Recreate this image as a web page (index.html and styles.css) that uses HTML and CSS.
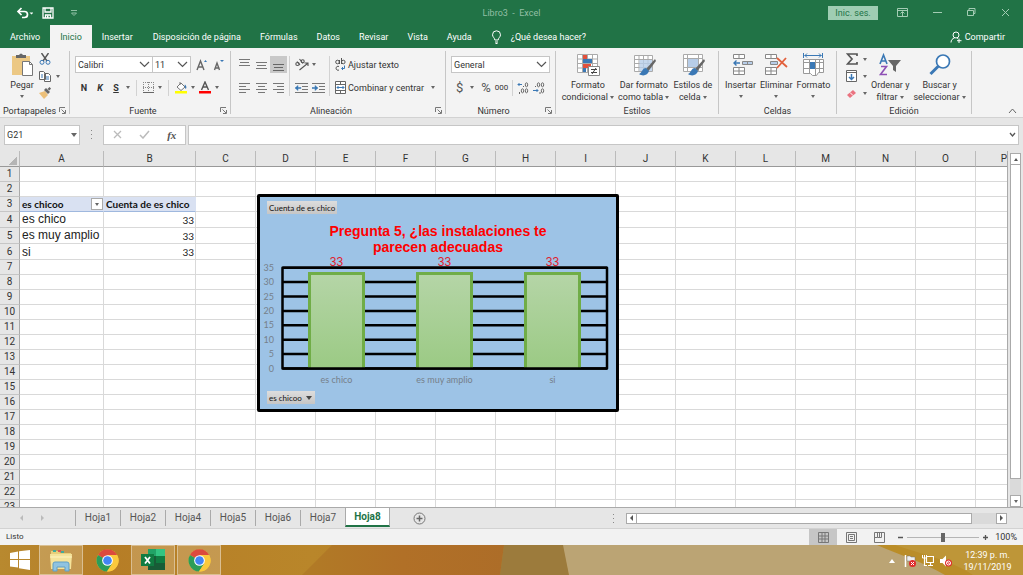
FILE: index.html
```html
<!DOCTYPE html>
<html lang="es">
<head>
<meta charset="utf-8">
<meta name="viewport" content="width=device-width, initial-scale=1">
<title>Libro3 - Excel</title>
<link rel="stylesheet" href="styles.css">
</head>
<body>
<header class="titlebar">
  <div class="quick">
    <button aria-label="Deshacer"><svg width="17" height="14" viewBox="0 0 17 14"><path d="M2 5.500h6.500a3 3 0 0 1 0 6H6M5.500 2 2 5.500 5.500 9" fill="none" stroke="#fff" stroke-width="1.700"/><path d="M13.500 6.500h4l-2 2z" fill="#fff"/></svg></button>
    <button aria-label="Guardar"><svg width="12" height="12" viewBox="0 0 12 12"><path d="M1 1h10v10H1zM3 1v4h6V1M3.500 11V8h5v3" fill="none" stroke="#fff" stroke-width="1.300"/><path d="M5 8.500h1.500V11H5z" fill="#fff"/></svg></button>
    <button aria-label="Personalizar barra"><svg width="8" height="8" viewBox="0 0 8 8"><path d="M1 1.500h6M1.500 4h5L4 6.500z" fill="none" stroke="#8fc0a4"/></svg></button>
  </div>
  <h1>Libro3&nbsp; -&nbsp; Excel</h1>
  <div class="window">
    <button class="signin">Inic. ses.</button>
    <button aria-label="Opciones de cinta"><svg width="11" height="9" viewBox="0 0 11 9"><path d="M.5.500h10v8H.500zM.5 2.500h10M5.500 8V4M3.500 5.500l2-2 2 2" fill="none" stroke="#a4ccb4"/></svg></button>
    <button aria-label="Minimizar"><svg width="9" height="9" viewBox="0 0 9 9"><path d="M0 4.500h9" stroke="#a4ccb4"/></svg></button>
    <button aria-label="Restaurar"><svg width="9" height="9" viewBox="0 0 9 9"><path d="M.5 2.500h6v5h-6zM2 2V.500h6v5H6.500" fill="none" stroke="#a4ccb4"/></svg></button>
    <button aria-label="Cerrar"><svg width="9" height="9" viewBox="0 0 9 9"><path d="m1 1 7 7M8 1 1 8" stroke="#a4ccb4"/></svg></button>
  </div>
</header>
<nav class="tabs">
  <button>Archivo</button><button class="on">Inicio</button><button>Insertar</button><button>Disposición de página</button><button>Fórmulas</button><button>Datos</button><button>Revisar</button><button>Vista</button><button>Ayuda</button>
  <button class="tell"><svg width="11" height="14" viewBox="0 0 11 14"><path d="M3.800 10C3.800 8 1.500 7 1.500 4.800a4 4 0 0 1 8 0C9.500 7 7.200 8 7.200 10zM4 12h3M4.500 13.500h2" fill="none" stroke="#fff"/></svg>¿Qué desea hacer?</button>
  <button class="share"><svg width="12" height="12" viewBox="0 0 12 12"><circle cx="6" cy="4" r="3" fill="none" stroke="#fff"/><path d="M1 11.500C1 9 2.500 7.500 4.500 7M7 7l1 .500M9 7.500v4.500M7 9.700h4.500" fill="none" stroke="#fff"/></svg>Compartir</button>
</nav>

<section class="ribbon">
  <div class="group clip">
    <div class="body">
      <button class="big"><svg width="24" height="24" viewBox="0 0 24 24"><path d="M2 3h18v19H2z" fill="#ecc884"/><path d="M6 2h3q2-3 4 0h3v3H6z" fill="#666"/><path d="M12.500 8.500h7l3 3v11h-10z" fill="#fff" stroke="#777"/><path d="M19.500 8.500v3h3" fill="none" stroke="#777"/></svg><span>Pegar</span><i class="dd"></i></button>
      <div class="stack">
        <button aria-label="Cortar"><svg width="12" height="12" viewBox="0 0 12 12"><path d="m2.500 0 5.500 8M9.500 0 4 8" stroke="#555" stroke-width="1.400"/><circle cx="3" cy="9.300" r="2" fill="none" stroke="#3a78b5"/><circle cx="9" cy="9.300" r="2" fill="none" stroke="#3a78b5"/></svg></button>
        <button aria-label="Copiar"><svg width="12" height="12" viewBox="0 0 12 12"><path d="M.500 1.500h4l2 2v6h-6zM5.500 3.500h4l2 2v6h-6z" fill="#fff" stroke="#666"/><path d="M2 5h2M2 7h2M7 7h3M7 9h3" stroke="#3a78b5"/></svg><i class="dd"></i></button>
        <button aria-label="Copiar formato"><svg width="12" height="12" viewBox="0 0 12 12"><path d="m0 6 6-2 3 4-4 4z" fill="#ecc07a"/><path d="m5 3 2-2 4 4-2 2zM8.500 2l2-2L12 1.500l-1.500 2z" fill="#666"/></svg></button>
      </div>
    </div>
    <footer>Portapapeles<svg class="launch" width="7" height="7" viewBox="0 0 7 7"><path d="M.500 5V.500H6M2.500 2.500l3.500 3.500M6.500 3v3.500H3" fill="none" stroke="#777"/></svg></footer>
  </div>

  <div class="group font">
    <div class="body rows">
      <div class="line">
        <label class="combo face"><select aria-label="Fuente"><option>Calibri</option></select><svg width="11" height="7" viewBox="0 0 11 7"><path d="m1 1 4.500 4.500L10 1" fill="none" stroke="#555" stroke-width="1.200"/></svg></label>
        <label class="combo size"><select aria-label="Tamaño"><option>11</option></select><svg width="11" height="7" viewBox="0 0 11 7"><path d="m1 1 4.500 4.500L10 1" fill="none" stroke="#555" stroke-width="1.200"/></svg></label>
        <button class="grow" aria-label="Aumentar fuente"><svg width="12" height="12" viewBox="0 0 12 12"><path d="m1 11 3.500-9 3.500 9M2 8h5" fill="none" stroke="#666" stroke-width="1.400"/><path d="m8 3 1.500-2L11 3z" fill="#3a78b5"/></svg></button>
        <button class="grow" aria-label="Disminuir fuente"><svg width="12" height="12" viewBox="0 0 12 12"><path d="m1.500 11 2.500-7 2.500 7M2.500 9h4" fill="none" stroke="#666" stroke-width="1.400"/><path d="m7 1 2 2 2-2z" fill="#3a78b5"/></svg></button>
      </div>
      <div class="line">
        <button class="letter bold">N</button><button class="letter ital">K</button><button class="letter under">S</button><i class="dd"></i><i class="bar"></i>
        <button aria-label="Bordes"><svg width="11" height="11" viewBox="0 0 11 11"><path d="M.500 0v10M5.500 0v10M10.500 0v10M0 .5h11M0 5.500h11" stroke="#888" stroke-dasharray="1 1"/><path d="M0 10.500h11" stroke="#666"/></svg></button><i class="dd"></i><i class="bar"></i>
        <button aria-label="Relleno"><svg width="12" height="13" viewBox="0 0 12 13"><path d="m2 6 4-4 4 4-4 3.500z" fill="#fff" stroke="#777"/><path d="M5 4V1" stroke="#777"/><path d="M10 3.500c2 2 1.500 4 .5 4.500L9.500 5z" fill="#3a78b5"/><path d="M0 10h12v2.500H0z" fill="#ff0"/></svg></button><i class="dd"></i>
        <button aria-label="Color de fuente"><svg width="12" height="13" viewBox="0 0 12 13"><path d="m2.500 9 3.500-8 3.500 8M3.500 6h5" fill="none" stroke="#555" stroke-width="1.400"/><path d="M0 10h12v2.500H0z" fill="#f00"/></svg></button><i class="dd"></i>
      </div>
    </div>
    <footer>Fuente<svg class="launch" width="7" height="7" viewBox="0 0 7 7"><path d="M.500 5V.500H6M2.500 2.500l3.500 3.500M6.500 3v3.500H3" fill="none" stroke="#777"/></svg></footer>
  </div>

  <div class="group align">
    <div class="body">
      <div class="aligns">
        <button aria-label="Arriba"><svg width="11" height="12" viewBox="0 0 11 12"><path d="M0 .5h11M1 3.500h9M0 6.500h11" stroke="#777"/></svg></button>
        <button aria-label="Medio"><svg width="11" height="12" viewBox="0 0 11 12"><path d="M0 3.500h11M1 6.500h9M0 9.500h11" stroke="#777"/></svg></button>
        <button class="pressed" aria-label="Abajo"><svg width="11" height="12" viewBox="0 0 11 12"><path d="M0 5.500h11M1 8.500h9M0 11.500h11" stroke="#666"/></svg></button>
        <button aria-label="Izquierda"><svg width="11" height="12" viewBox="0 0 11 12"><path d="M0 1.500h11M0 4.500h7M0 7.500h11M0 10.500h7" stroke="#777"/></svg></button>
        <button aria-label="Centro"><svg width="11" height="12" viewBox="0 0 11 12"><path d="M0 1.500h11M2 4.500h7M0 7.500h11M2 10.500h7" stroke="#777"/></svg></button>
        <button aria-label="Derecha"><svg width="11" height="12" viewBox="0 0 11 12"><path d="M0 1.500h11M4 4.500h7M0 7.500h11M4 10.500h7" stroke="#777"/></svg></button>
      </div>
      <div class="indent">
        <button class="wide" aria-label="Orientación"><svg width="14" height="13" viewBox="0 0 14 13"><g fill="none" stroke="#555" stroke-width="1.100"><ellipse cx="2.500" cy="6" rx="1.700" ry="1.500"/><path d="m2 3.500 3 3.500M4.500 1l3.500 4.500"/><circle cx="7.700" cy="3.200" r="1.500"/><path d="m4.500 12 8-6.500M9.500 5H13v3"/></g></svg><i class="dd"></i></button>
        <button aria-label="Disminuir sangría"><svg width="13" height="12" viewBox="0 0 13 12"><path d="M0 1.500h13M7 4.500h6M7 7.500h6M0 10.500h13" stroke="#777"/><path d="m0 6 3-2.500v2h3v1H3v2z" fill="#3a78b5" stroke="#3a78b5" stroke-width=".5"/></svg></button>
        <button aria-label="Aumentar sangría"><svg width="13" height="12" viewBox="0 0 13 12"><path d="M0 1.500h13M7 4.500h6M7 7.500h6M0 10.500h13" stroke="#777"/><path d="M6 6 3 3.500v2H0v1h3v2z" fill="#3a78b5" stroke="#3a78b5" stroke-width=".5"/></svg></button>
      </div>
      <div class="wraps">
        <button><svg width="11" height="13" viewBox="0 0 11 13"><g fill="none" stroke="#555"><circle cx="2.500" cy="4" r="1.800"/><path d="M4.500 2v4M6.500 0v6M4 8.500a2 2 0 1 0 0 3.500"/><circle cx="8.300" cy="4" r="1.800"/></g><path d="M9.500 7.500v3H7M8 9l-1.500 1.500L8 12" fill="none" stroke="#3a78b5"/></svg>Ajustar texto</button>
        <button><svg width="11" height="13" viewBox="0 0 11 13"><path d="M.500.500h10v12H.500zM.500 3.500h10M.500 9.500h10M5.500.5v3M5.500 9.500v3" fill="#fff" stroke="#666"/><path d="M2 6.500h7M3.500 5 2 6.500 3.500 8M7.500 5 9 6.500 7.500 8" fill="none" stroke="#3a78b5"/></svg>Combinar y centrar<i class="dd"></i></button>
      </div>
    </div>
    <footer>Alineación<svg class="launch" width="7" height="7" viewBox="0 0 7 7"><path d="M.500 5V.500H6M2.500 2.500l3.500 3.500M6.500 3v3.500H3" fill="none" stroke="#777"/></svg></footer>
  </div>

  <div class="group number">
    <div class="body rows">
      <div class="line"><label class="combo format"><select aria-label="Formato de número"><option>General</option></select><svg width="11" height="7" viewBox="0 0 11 7"><path d="m1 1 4.500 4.500L10 1" fill="none" stroke="#555" stroke-width="1.200"/></svg></label></div>
      <div class="line nums">
        <button class="sign">$</button><i class="dd"></i><button class="sign">%</button><button class="zeros">000</button><i class="bar"></i>
        <button aria-label="Aumentar decimales"><svg width="12" height="12" viewBox="0 0 12 12"><path d="M5 2.500H1M2.500 1 1 2.500 2.500 4" fill="none" stroke="#3a78b5"/><g fill="none" stroke="#666"><ellipse cx="9.500" cy="2.800" rx="1.200" ry="2"/><ellipse cx="5.500" cy="8.800" rx="1.200" ry="2"/><ellipse cx="9.500" cy="8.800" rx="1.200" ry="2"/><path d="M2.500 10v2M6.500 4v1"/></g></svg></button>
        <button aria-label="Disminuir decimales"><svg width="12" height="12" viewBox="0 0 12 12"><path d="M0 8.500h5M3.500 7 5 8.500 3.500 10" fill="none" stroke="#3a78b5"/><g fill="none" stroke="#666"><ellipse cx="5.500" cy="2.800" rx="1.200" ry="2"/><ellipse cx="9.500" cy="2.800" rx="1.200" ry="2"/><ellipse cx="9.500" cy="8.800" rx="1.200" ry="2"/><path d="M2.500 4v1M7 10v2"/></g></svg></button>
      </div>
    </div>
    <footer>Número<svg class="launch" width="7" height="7" viewBox="0 0 7 7"><path d="M.500 5V.500H6M2.500 2.500l3.500 3.500M6.500 3v3.500H3" fill="none" stroke="#777"/></svg></footer>
  </div>

  <div class="group styles">
    <div class="body">
      <button class="big"><svg width="24" height="24" viewBox="0 0 24 24"><path d="M1.500 1.500h20v18h-20zM6.500 1.500v18M16.500 1.500v18M1.500 6h20M1.500 10.500h20M1.500 15h20M11.500 1.500v18" fill="#fff" stroke="#aaa"/><path d="M7 2h4v4H7zM7 11h8v4H7z" fill="#e2503c"/><path d="M7 6h9v4H7zM7 15h3v4H7z" fill="#3a78b5"/><path d="M12.500 13.500h11v9h-11z" fill="#fff" stroke="#888"/><path d="M15 16.500h6M15 19.500h6M20 15l-4 6" stroke="#444"/></svg><span>Formato<br>condicional <i class="dd"></i></span></button>
      <button class="big"><svg width="24" height="24" viewBox="0 0 24 24"><path d="M2.500 2.500h18v16h-18zM2.500 6.500h18M2.500 10.500h18M2.500 14.500h18M7 2.500v16M11.500 2.500v16M16 2.500v16" fill="#fff" stroke="#aaa"/><path d="M7.500 7H20v11H7.500z" fill="#b7cde8" opacity=".8"/><path d="m23 6-9 10 2.500 2L24 8z" fill="#666"/><path d="M14 15c-4 0-4 5-7 6 4 3 9 1 10-3z" fill="#3a78b5"/></svg><span>Dar formato<br>como tabla <i class="dd"></i></span></button>
      <button class="big"><svg width="24" height="24" viewBox="0 0 24 24"><path d="M2.500 1.500h19v17h-19zM2.500 5.500h19M2.500 14.500h19M6.500 1.500v17M17.500 1.500v17" fill="#fff" stroke="#aaa"/><path d="M7 6h10v8H7z" fill="#b7cde8"/><path d="m23 6-9 10 2.500 2L24 8z" fill="#666"/><path d="M14 15c-4 0-4 5-7 6 4 3 9 1 10-3z" fill="#3a78b5"/></svg><span>Estilos de<br>celda <i class="dd"></i></span></button>
    </div>
    <footer>Estilos</footer>
  </div>

  <div class="group cells">
    <div class="body">
      <button class="big"><svg width="24" height="24" viewBox="0 0 24 24"><path d="M4.500 1.500h11v4h-11zM10 1.500v4M4.500 14.500h11v7h-11zM4.500 18h11M10 14.500v7" fill="#fff" stroke="#888"/><path d="M13.500 8.500h10v3h-10zM18.500 8.500v3" fill="#b7cde8" stroke="#888"/><path d="M11 10H5M7.500 7.500 5 10l2.500 2.500" fill="none" stroke="#3a78b5" stroke-width="1.400"/></svg><span>Insertar</span><i class="dd"></i></button>
      <button class="big"><svg width="24" height="24" viewBox="0 0 24 24"><path d="M1.500 1.500h11v4h-11zM7 1.500v4M1.500 14.500h11v7h-11zM1.500 18h11M7 14.500v7" fill="#fff" stroke="#888"/><path d="M6.500 8.500h7v3h-7z" fill="#b7cde8" stroke="#888"/><path d="m13 5 10 9M22 5l-9 10" stroke="#e2603c" stroke-width="1.800"/></svg><span>Eliminar</span><i class="dd"></i></button>
      <button class="big"><svg width="24" height="24" viewBox="0 0 24 24"><path d="M3.500 2.500h17M6 .5l-2 2 2 2M18 .5l2 2-2 2M2.500 0v5M21.500 0v5" fill="none" stroke="#3a78b5"/><path d="M2.500 6.500h20v13h-5l-2 3h-4l-2-2h-7zM2.500 9.500h20M2.500 15.500h20M8.500 6.500v14M14.500 6.500v16M18.500 6.500v13" fill="#fff" stroke="#999"/><path d="M9 9h5v7H9z" fill="#3a78b5"/></svg><span>Formato</span><i class="dd"></i></button>
    </div>
    <footer>Celdas</footer>
  </div>

  <div class="group edit">
    <div class="body">
      <div class="stack">
        <button aria-label="Autosuma"><svg width="12" height="12" viewBox="0 0 12 12"><path d="M11 3V1H1.500L6 6l-4.500 5H11V9" fill="none" stroke="#555" stroke-width="1.700"/></svg><i class="dd"></i></button>
        <button aria-label="Rellenar"><svg width="12" height="12" viewBox="0 0 12 12"><path d="M.5.500h10v11H.500zM.5 2.500h10" fill="#fff" stroke="#666"/><path d="M5.500 4v5M3 7l2.500 2.500L8 7" fill="none" stroke="#3a78b5" stroke-width="1.500"/></svg><i class="dd"></i></button>
        <button aria-label="Borrar"><svg width="12" height="12" viewBox="0 0 12 12"><path d="m1 8 6-5 3 3-6 5z" fill="#ea7380"/><path d="m4 5.500 3 3" stroke="#fff"/></svg><i class="dd"></i></button>
      </div>
      <button class="big"><svg width="24" height="24" viewBox="0 0 24 24"><path d="m2 11 3.500-9L9 11M3 8h5" fill="none" stroke="#3a78b5" stroke-width="1.600"/><path d="M3 13.500h5.500l-6 8H9" fill="none" stroke="#8e50b5" stroke-width="1.600"/><path d="M10 7h13l-5 6v6l-3-2v-4z" fill="#666"/></svg><span>Ordenar y<br>filtrar <i class="dd"></i></span></button>
      <button class="big"><svg width="24" height="24" viewBox="0 0 24 24"><circle cx="15" cy="8.500" r="6.500" fill="#fff" stroke="#3a78b5" stroke-width="1.700"/><path d="m10.500 13-8 8" stroke="#3a78b5" stroke-width="3"/></svg><span>Buscar y<br>seleccionar <i class="dd"></i></span></button>
    </div>
    <footer>Edición</footer>
  </div>
  <button class="collapse" aria-label="Contraer cinta"><svg width="9" height="6" viewBox="0 0 9 6"><path d="m1 5 3.500-4L8 5" fill="none" stroke="#666"/></svg></button>
</section>

<section class="formula">
  <label class="combo name"><select aria-label="Cuadro de nombres"><option>G21</option></select><i class="dd"></i></label>
  <i class="dots"></i>
  <div class="fx">
    <button aria-label="Cancelar"><svg width="9" height="9" viewBox="0 0 9 9"><path d="m1 1 7 7M8 1 1 8" stroke="#bbb" stroke-width="1.300"/></svg></button>
    <button aria-label="Introducir"><svg width="11" height="9" viewBox="0 0 11 9"><path d="m1 5 3 3 6-7" fill="none" stroke="#bbb" stroke-width="1.500"/></svg></button>
    <button class="func">fx</button>
  </div>
  <div class="entry"><input aria-label="Barra de fórmulas"><svg width="7" height="6" viewBox="0 0 7 6"><path d="m1 1 2.500 3L6 1" fill="none" stroke="#555" stroke-width="1.300"/></svg></div>
</section>

<main class="sheet">
  <div class="grid">
    <table id="cells"></table>
    <figure class="chart">
      <button class="field">Cuenta de es chico</button>
      <figcaption>Pregunta 5, ¿las instalaciones te<br>parecen adecuadas</figcaption>
      <svg class="plot" id="plot" width="356" height="134" viewBox="0 0 356 134"></svg>
      <button class="field">es chicoo <i class="dd"></i></button>
    </figure>
  </div>
  <div class="vscroll"><button aria-label="Subir"><i class="up"></i></button><i class="thumb"></i><i class="gap"></i><button aria-label="Bajar"><i class="dd"></i></button></div>
</main>

<nav class="sheets">
  <div class="arrows"><i class="left"></i><i class="right"></i></div>
  <button>Hoja1</button><button>Hoja2</button><button>Hoja4</button><button>Hoja5</button><button>Hoja6</button><button>Hoja7</button><button class="on">Hoja8</button>
  <button class="add" aria-label="Hoja nueva"><svg width="13" height="13" viewBox="0 0 13 13"><circle cx="6.500" cy="6.500" r="5.500" fill="none" stroke="#777"/><path d="M6.500 3.500v6M3.500 6.500h6" stroke="#666" stroke-width="1.500"/></svg></button>
  <i class="dots"></i>
  <div class="hscroll"><button aria-label="Izquierda"><i class="left"></i></button><i class="thumb"></i><i class="gap"></i><button aria-label="Derecha"><i class="right"></i></button></div>
</nav>

<footer class="status">
  <span class="ready">Listo</span>
  <button class="view on" aria-label="Normal"><svg width="11" height="11" viewBox="0 0 11 11"><path d="M.5.500h10v10H.500zM.5 4h10M.5 7h10M4 .5v10M7 .5v10" fill="none" stroke="#777"/></svg></button>
  <button class="view" aria-label="Diseño de página"><svg width="11" height="11" viewBox="0 0 11 11"><path d="M.5.500h10v10H.500zM2.500 2.500h6v6h-6zM4 4.500h3M4 6.500h3" fill="none" stroke="#777"/></svg></button>
  <button class="view" aria-label="Salto de página"><svg width="11" height="11" viewBox="0 0 11 11"><path d="M.5.500h10v10H.500zM3.500.5v5h-3M3.500 5.500h4v-5M5.500.5v5" fill="none" stroke="#777"/></svg></button>
  <button class="zoom" aria-label="Alejar"><svg width="7" height="7" viewBox="0 0 7 7"><path d="M1 3.500h5" stroke="#555" stroke-width="1.500"/></svg></button>
  <input type="range" aria-label="Zoom" min="0" max="100" value="50">
  <button class="zoom" aria-label="Acercar"><svg width="7" height="7" viewBox="0 0 7 7"><path d="M1 3.500h5M3.500 1v5" stroke="#555" stroke-width="1.300"/></svg></button>
  <span class="pct">100%</span>
</footer>

<footer class="taskbar">
  <svg class="wall" viewBox="0 0 1023 30" preserveAspectRatio="none">
    <defs>
      <linearGradient id="gold"><stop offset="0" stop-color="#b8892f"/><stop offset=".2" stop-color="#b67d26"/><stop offset=".6" stop-color="#b9862a"/><stop offset="1" stop-color="#b37a26"/></linearGradient>
      <linearGradient id="rust"><stop offset="0" stop-color="#b17b26"/><stop offset=".5" stop-color="#b17027"/><stop offset="1" stop-color="#ad6d28"/></linearGradient>
    </defs>
    <path d="M0 0h520v30H0z" fill="url(#gold)"/>
    <path d="M332 0h172l-4 30H302z" fill="url(#rust)"/>
    <path d="M504 0h60l5 30h-69z" fill="#9c7b3c"/>
    <path d="M563 0h460v30H569z" fill="#bba474"/>
    <path d="M877 0h146v30h-78c-20-12-45-20-68-30z" fill="#ba8d28"/>
    <path d="M895 0h128v30h-50c-20-14-55-22-78-30z" fill="#be9638"/>
  </svg>
  <button class="start" aria-label="Inicio"><svg width="22" height="20" viewBox="0 0 22 20"><path d="m1 3 8-1.500V9H1zM10 1.300 21 0v9H10zM1 10h8v7.500L1 16.500zM10 10h11v10l-11-1.700z" fill="#fff"/></svg></button>
  <button class="app open" aria-label="Explorador"><svg width="24" height="24" viewBox="0 0 24 24"><path d="M2 3h8l1 2h11v14H2z" fill="#e8cf7a"/><path d="M4 2h3v2H4zM12 3h3v2h-3z" fill="#4a9"/><path d="M9 2h3v2H9z" fill="#d55"/><path d="M1 6h22l-1 15H2z" fill="#f5e39a"/><path d="M1 9h22" stroke="#fff4c0"/><path d="M4 23v-7q0-2 2-2h12q2 0 2 2v7h-4v-4H8v4z" fill="#8fc3e0" stroke="#5f9fc6"/></svg></button>
  <button class="app" aria-label="Chrome"><svg width="23" height="23" viewBox="0 0 24 24"><circle cx="12" cy="12" r="11.500" fill="#fbc93c"/><path d="M12 12 2 6.200A11.500 11.500 0 0 1 22 6.200z" fill="#dc4a3d"/><path d="M12 12 2 6.200a11.500 11.500 0 0 0 9.500 17.300L17 15z" fill="#2c9d58"/><path d="M12 6.200h10a11.500 11.500 0 0 1-10.500 17.300L17 15z" fill="#fbc93c"/><circle cx="12" cy="12" r="5.600" fill="#fff"/><circle cx="12" cy="12" r="4.500" fill="#4285f4"/></svg></button>
  <button class="app open" aria-label="Excel"><svg width="24" height="24" viewBox="0 0 24 24"><path d="M7 1h8v7H7z" fill="#21a366"/><path d="M15 1h9v7h-9z" fill="#33c481"/><path d="M7 8h8v14H7z" fill="#185c37"/><path d="M15 8h9v7h-9z" fill="#107c41"/><path d="M15 15h9v7h-9z" fill="#185c37"/><path d="M0 6h13v12H0z" fill="#107c41"/><path d="m4 9 5 6.500M9 9l-5 6.500" stroke="#fff" stroke-width="1.800"/></svg></button>
  <button class="app open" aria-label="Chrome, ventana"><svg width="23" height="23" viewBox="0 0 24 24"><circle cx="12" cy="12" r="11.500" fill="#fbc93c"/><path d="M12 12 2 6.200A11.500 11.500 0 0 1 22 6.200z" fill="#dc4a3d"/><path d="M12 12 2 6.200a11.500 11.500 0 0 0 9.500 17.300L17 15z" fill="#2c9d58"/><path d="M12 6.200h10a11.500 11.500 0 0 1-10.500 17.300L17 15z" fill="#fbc93c"/><circle cx="12" cy="12" r="5.600" fill="#fff"/><circle cx="12" cy="12" r="4.500" fill="#4285f4"/></svg></button>
  <div class="tray">
    <svg width="6" height="4" viewBox="0 0 6 4"><path d="M0 4h6L3 0z" fill="#fff"/></svg>
    <svg width="12" height="12" viewBox="0 0 12 12"><path d="M1.500 0v12" stroke="#fff" stroke-width="1.500"/><path d="M3 1h3l1 1h4v5H7L6 6H3z" fill="#eee" stroke="#777" stroke-width=".5"/><circle cx="8.500" cy="8.500" r="3.500" fill="#e02b2b"/><path d="m7 7 3 3M10 7l-3 3" stroke="#fff"/></svg>
    <svg width="12" height="12" viewBox="0 0 12 12"><path d="M4.500 1.500h7v6h-7zM6 10.500h5M8.500 7.500v3M2.500 4v6.500H5" fill="none" stroke="#fff" stroke-width="1.200"/><path d="M.5 0v3h4V0M2.500 0v4" fill="none" stroke="#fff"/></svg>
    <svg width="12" height="12" viewBox="0 0 12 12"><path d="M0 4h2.500L6 .5v11L2.500 8H0z" fill="#fff"/><circle cx="8.500" cy="8" r="3.500" fill="#e02b2b"/><circle cx="8.500" cy="8" r="2" fill="none" stroke="#fff"/><path d="m7 6.500 3 3" stroke="#fff"/></svg>
  </div>
  <time>12:39 p. m.<br>19/11/2019</time>
</footer>
<script src="app.js"></script>
</body>
</html>
```
FILE: styles.css
```css
* { box-sizing: border-box; }
body {
  margin: 0;
  height: 100vh;
  display: flex;
  flex-direction: column;
  overflow: hidden;
  font: 9px/12px Roboto, "Noto Sans", sans-serif;
  color: #333;
  background: #e6e6e6;
}
button, select, input {
  font: inherit;
  color: inherit;
  background: none;
  border: 0;
  border-radius: 0;
  padding: 0;
  margin: 0;
}
button { white-space: nowrap; }
svg { display: block; flex: none; }

/* small triangles */
.dd, .up, .left, .right { display: inline-block; flex: none; border: 2px solid transparent; }
.dd { border-top: 3px solid #666; border-bottom: 0; vertical-align: middle; }
.up { border-bottom: 3px solid #555; border-top: 0; }
.left { border: 3px solid transparent; border-right-color: #555; border-left: 0; }
.right { border: 3px solid transparent; border-left-color: #555; border-right: 0; }
.bar { width: 1px; height: 16px; background: #d2d2d2; flex: none; }
.dots { width: 1px; height: 9px; flex: none; background: repeating-linear-gradient(#888 0 1px, transparent 1px 4px); }

.titlebar {
  display: grid;
  grid-template-columns: 1fr auto 1fr;
  align-items: center;
  height: 25px;
  flex: none;
  background: #217346;
}
.titlebar h1 { margin: 0; font: inherit; color: #93bfa5; }
.quick { display: flex; align-items: center; gap: 9px; padding-left: 16px; }
.quick button:last-child { margin-left: 7px; }
.window { display: flex; align-items: center; justify-content: flex-end; gap: 25px; padding-right: 13px; }
.signin { height: 14px; width: 50px; background: #9fcdb3; color: #217346; margin-right: -6px; }

.tabs { display: flex; height: 23px; flex: none; background: #217346; color: #fff; }
.tabs button { padding: 0 10px; }
.tabs button:nth-child(n+4) { padding-right: 9px; }
.tabs .on { background: #f3f3f3; color: #217346; }
.tabs .tell, .tabs .share { display: flex; align-items: center; gap: 9px; }
.tabs .share:last-child { margin-left: auto; gap: 3px; padding-right: 18px; }

.ribbon { display: flex; height: 70px; flex: none; background: #f3f3f3; border-bottom: 1px solid #d2d2d2; }
.group { position: relative; display: flex; flex-direction: column; flex: none; border-right: 1px solid #c6c6c6; margin: 3px 0; }
.group .body { display: flex; flex: 1; min-height: 0; }
.group > footer { height: 12px; line-height: 18px; text-align: center; padding: 0 20px 0 6px; }
.launch { position: absolute; right: 3px; bottom: 0; }
.group.clip > footer { text-align: left; padding: 0 3px; }
.group.styles > footer, .group.cells > footer, .group.edit > footer { padding: 0 1px; }
.clip { width: 70px; }
.font { width: 161px; }
.align { width: 215px; }
.number { width: 110px; }
.styles { width: 163px; }
.cells { width: 118px; }
.edit { width: 135px; }
.big { display: flex; flex-direction: column; align-items: center; padding-top: 2px; line-height: 12px; }
.big svg { margin-bottom: 2px; }
.big > .dd { margin-top: 4px; }
.clip .body { padding-left: 10px; gap: 5px; }
.stack { display: flex; flex-direction: column; gap: 5px; padding-top: 2px; }
.stack button { display: flex; align-items: center; gap: 5px; }

.rows { flex-direction: column; gap: 6px; padding: 5px 5px 0; }
.line { display: flex; align-items: center; height: 17px; }
.combo { display: grid; grid-template-columns: 1fr auto; align-items: center; height: 17px; background: #fff; border: 1px solid #c6c6c6; }
.combo select { grid-area: 1 / 1 / 2 / 3; appearance: none; width: 100%; height: 100%; padding-left: 2px; outline: 0; }
.combo svg, .combo .dd { grid-area: 1 / 2; margin-right: 2px; pointer-events: none; }
.face { width: 78px; }
.size { width: 38px; border-left: 0; }
.grow { margin-left: 5px; }
.font .line + .line { gap: 4px; padding-left: 3px; }
.font .bar { margin: 0 2px; }
.letter { width: 12px; flex: none; font-weight: 700; }
.ital { font-style: italic; }
.under { text-decoration: underline; }

.align .body { padding-top: 5px; }
.aligns { display: grid; grid-template-columns: repeat(3, 17px); grid-auto-rows: 17px; row-gap: 6px; padding: 0 2px 0 5px; }
.aligns button { display: grid; place-items: center; }
.aligns .pressed { background: #c8c8c8; }
.indent { display: grid; grid-template-columns: 13px 13px; grid-auto-rows: 17px; gap: 6px 4px; padding: 0 4px 0 5px; border-left: 1px solid #d2d2d2; height: 40px; align-items: center; }
.indent .wide { grid-column: 1 / 3; display: flex; align-items: center; gap: 3px; }
.wraps { display: grid; grid-auto-rows: 17px; row-gap: 6px; padding-left: 5px; border-left: 1px solid #d2d2d2; height: 40px; }
.wraps button { display: flex; align-items: center; gap: 2px; }
.wraps .dd { margin-left: 5px; }

.format { width: 100%; }
.nums { gap: 4px; padding-left: 5px; }
.sign { font-size: 13px; color: #555; }
.zeros { font-size: 8px; }
.nums .sign + .dd { margin: 0 3px; }

.styles .body { justify-content: center; gap: 4px; }
.cells .body { padding-left: 6px; gap: 4px; }
.edit .body { padding-left: 9px; gap: 4px; }
.collapse { margin: auto 6px 3px auto; }

.formula { display: flex; align-items: center; height: 33px; flex: none; padding: 0 4px; }
.formula .combo { width: 76px; height: 20px; }
.formula .dd { border-width: 4px 3px 0; }
.formula .dots { margin: 0 11px; }
.fx { display: flex; align-items: center; justify-content: space-around; width: 83px; height: 20px; background: #fff; border: 1px solid #c6c6c6; margin-right: 2px; }
.func { font: italic 700 11px/12px "Liberation Serif", serif; color: #555; }
.entry { display: flex; align-items: center; flex: 1; height: 20px; background: #fff; border: 1px solid #c6c6c6; padding-right: 2px; }
.entry input { flex: 1; height: 100%; min-width: 0; outline: 0; }

.sheet { display: flex; flex: 1; min-height: 0; border-bottom: 1px solid #aaa; }
.grid { position: relative; flex: 1; min-width: 0; overflow: hidden; background: #fff; border-right: 1px solid #aaa; }
table { border-collapse: separate; border-spacing: 0; table-layout: fixed; }
th, td { padding: 0; border-right: 1px solid #d9d9d9; border-bottom: 1px solid #d9d9d9; white-space: nowrap; overflow: visible; height: 15px; line-height: 14px; }
th { background: #e6e6e6; font-weight: 400; font-size: 10px; }
thead th { height: 16px; line-height: 15px; border-color: #bbb; border-bottom-color: #999; }
tbody th { border-right-color: #aaa; border-bottom-color: #c6c6c6; }
.tall th, .tall td { height: 16px; line-height: 15px; }
.corner { height: 9px; width: 9px; margin: 3px 2px 0 auto; background: linear-gradient(135deg, transparent 50%, #b5b5b5 50%); }
td { font-family: "Liberation Sans", Arial, sans-serif; font-size: 12px; color: #222; padding-left: 2px; }
td.head { background: #d9e1f2; border-color: #d9e1f2; border-bottom-color: #9fb8de; font: 700 10px/14px Lato, sans-serif; color: #111; }
.head > div { display: flex; justify-content: space-between; align-items: center; height: 14px; }
.filter { display: grid; place-items: center; width: 12px; height: 12px; background: #fff; border: 1px solid #aaa; }
td.num { font-family: Lato, sans-serif; font-size: 10px; text-align: right; padding: 2px 1px 0 0; line-height: 13px; }

.chart {
  position: absolute;
  left: 257px;
  top: 43px;
  width: 362px;
  height: 218px;
  margin: 0;
  padding-top: 4px;
  background: #9dc3e6;
  border: 3px solid #000;
  border-radius: 2px;
}
.field { display: block; margin-left: 7px; padding: 0 2px; height: 13px; font: 8px/12px Lato, sans-serif; color: #111; background: linear-gradient(#ddd, #c6c6c6); }
.field .dd { border-width: 4px 3px 0; border-top-color: #444; margin: 0 1px 0 2px; }
.chart figcaption { font: 700 14px/16px "Liberation Sans", Arial, sans-serif; color: #f00; text-align: center; padding-top: 9px; }
.chart .plot { margin: -2px 0 4px; }
.plot text { font: 9px Lato, sans-serif; fill: #76808a; }
.plot .value { font: 12px "Liberation Sans", Arial, sans-serif; fill: #e11d2c; }

.vscroll { display: flex; flex-direction: column; width: 15px; padding: 2px 2px 0; }
.vscroll button, .hscroll button { display: grid; place-items: center; flex: none; background: #fff; border: 1px solid #aaa; }
.vscroll button { height: 12px; }
.vscroll .thumb { flex: 1; background: #fff; border: 1px solid #aaa; border-top: 0; }
.vscroll .gap { height: 16px; background: #dadada; }

.sheets { display: flex; align-items: center; height: 21px; flex: none; font-size: 10px; border-bottom: 1px solid #d2d2d2; }
.sheets > button { width: 45px; height: 16px; border-left: 1px solid #aaa; color: #555; }
.sheets > .on { height: 19px; margin-bottom: auto; background: #fff; color: #217346; font-weight: 700; border-bottom: 2px solid #217346; border-right: 1px solid #aaa; padding-top: 1px; }
.sheets > .add { display: grid; place-items: center; border: 0; width: 13px; margin-left: 23px; }
.arrows { display: flex; gap: 18px; width: 75px; padding-left: 20px; }
.arrows .left { border-right-color: #bbb; }
.arrows .right { border-left-color: #bbb; }
.sheets .dots { margin: 0 12px 0 auto; }
.hscroll { display: flex; width: 381px; height: 11px; margin-right: 16px; }
.hscroll button { width: 11px; }
.hscroll .thumb { flex: 1; background: #fff; border: 1px solid #aaa; border-left: 0; }
.hscroll .gap { width: 24px; background: #dadada; }

.status { display: flex; align-items: center; height: 16px; flex: none; background: #f2f2f2; font-size: 8px; padding: 0 6px; }
.ready { margin-right: auto; }
.view { display: grid; place-items: center; width: 28px; height: 16px; }
.view.on { background: #c6c6c6; }
.zoom { margin: 0 3px; }
.status input { appearance: none; width: 72px; height: 11px; background: linear-gradient(#b5b5b5, #b5b5b5) center / 100% 1px no-repeat; }
.status input::-webkit-slider-thumb { appearance: none; width: 4px; height: 9px; background: #666; }
.status .view + .zoom { margin-left: 4px; }
.pct { width: 25px; text-align: right; font-size: 9px; }

.taskbar { position: relative; display: flex; height: 30px; flex: none; color: #fff; background: #b8842a; }
.wall { position: absolute; inset: 0; width: 100%; height: 100%; z-index: 0; }
.taskbar button, .tray, time { position: relative; display: grid; place-items: center; }
.start { width: 39px; }
.app { width: 44px; margin-right: 2px; border: 1px solid transparent; }
.open { background: #ffffff30; border-color: #ffffff60; }
.taskbar .tray { display: flex; align-items: center; gap: 6px; margin-left: auto; padding-top: 2px; }
.tray svg:first-child { margin-right: 3px; }
time { width: 71px; text-align: center; line-height: 12px; padding-top: 2px; }
```
FILE: app.js
```js
const columns = "ABCDEFGHIJKLMNOP".split("");
const widths = [84, 92].concat(Array(13).fill(60), 57);
const data = {
  4: ["es chico", 33],
  5: ["es muy amplio", 33],
  6: ["si", 33]
};

function cell(row, col) {
  if (row === 3 && col === 0) {
    return '<td class="head"><div>es chicoo<button class="filter" aria-label="Filtrar"><i class="dd"></i></button></div></td>';
  }
  if (row === 3 && col === 1) return '<td class="head">Cuenta de es chico</td>';
  const value = data[row] && data[row][col];
  if (value === undefined) return "<td></td>";
  return `<td${typeof value === "number" ? ' class="num"' : ""}>${value}</td>`;
}

let html = '<colgroup><col style="width:20px">';
html += widths.map(w => `<col style="width:${w}px">`).join("");
html += '</colgroup><thead><tr><th><div class="corner"></div></th>';
html += columns.map(c => `<th>${c}</th>`).join("") + "</tr></thead><tbody>";
for (let row = 1; row <= 23; row++) {
  html += `<tr${row === 4 || row === 5 ? ' class="tall"' : ""}><th>${row}</th>`;
  html += columns.map((c, i) => cell(row, i)).join("") + "</tr>";
}
const table = document.getElementById("cells");
table.innerHTML = html + "</tbody>";
table.style.width = 20 + widths.reduce((a, b) => a + b, 0) + "px";

const bottom = 115.5;
const unit = 2.88;
const left = 22.5;
const right = 347;
let plot = '<defs><linearGradient id="leaf" x2="0" y2="1"><stop stop-color="#b5d5a7"/><stop offset="1" stop-color="#9bca84"/></linearGradient></defs>';
for (let v = 0; v <= 35; v += 5) {
  const y = bottom - v * unit;
  plot += `<path d="M${left} ${y}H${right}" stroke="#000" stroke-width="2.500"/>`;
  plot += `<text x="14" y="${y + 3}" text-anchor="end">${v}</text>`;
}
["es chico", "es muy amplio", "si"].forEach((name, i) => {
  const mid = 76.5 + i * 108;
  const top = bottom - 33 * unit;
  plot += `<path d="M${mid - 27} ${bottom}V${top}H${mid + 27}V${bottom}" fill="url(#leaf)" stroke="#70ad47" stroke-width="3"/>`;
  plot += `<text class="value" x="${mid}" y="13" text-anchor="middle">33</text>`;
  plot += `<text x="${mid}" y="130" text-anchor="middle">${name}</text>`;
});
plot += `<path d="M${left} ${bottom}V${bottom - 35 * unit}H${right}V${bottom}z" fill="none" stroke="#000" stroke-width="2.500" stroke-linejoin="round"/>`;
document.getElementById("plot").innerHTML = plot;
```
